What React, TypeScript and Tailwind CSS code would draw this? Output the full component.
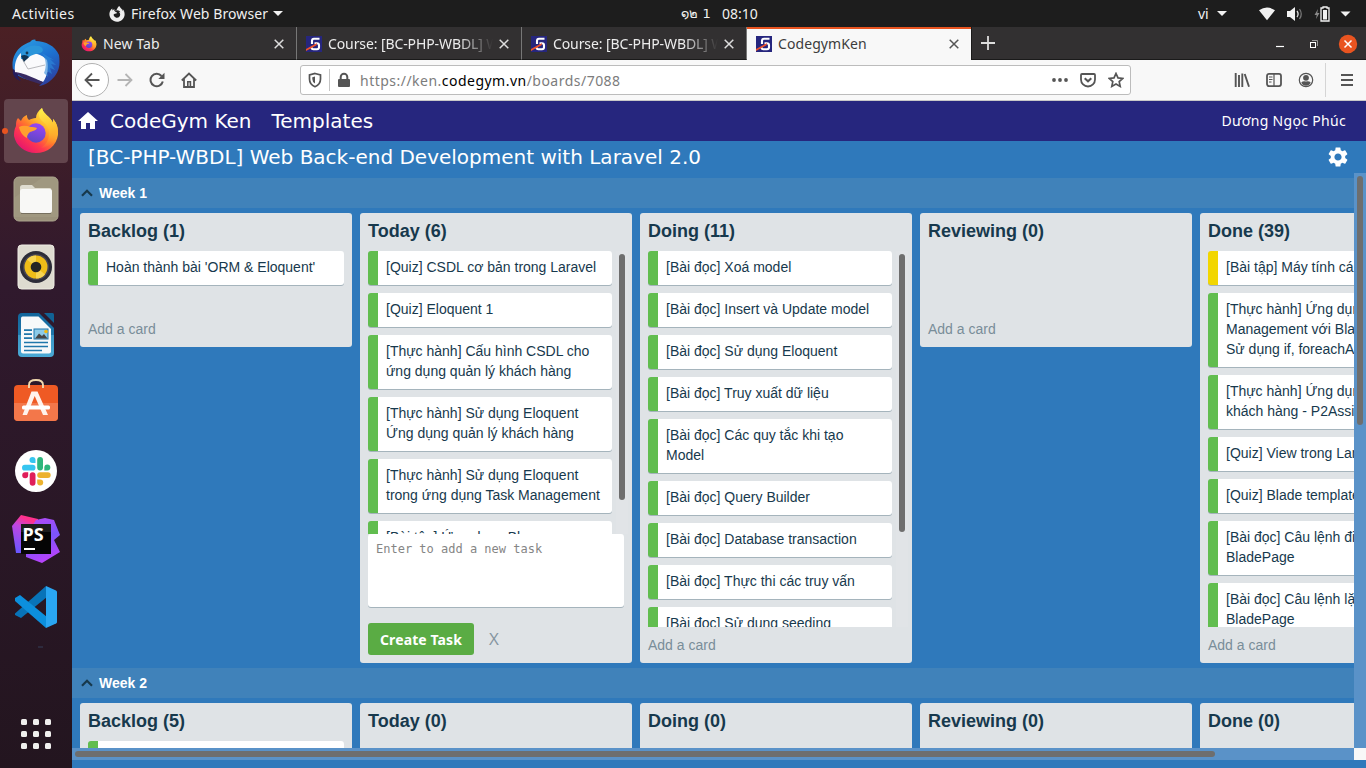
import type { ReactNode } from "react";
import { MdHome, MdSettings } from "react-icons/md";
import { FaFirefoxBrowser } from "react-icons/fa";

const UI = "font-['Noto_Sans','Open_Sans','DejaVu_Sans',sans-serif]";

/* ---------- logos ---------- */

function FirefoxLogo({ id, className }: { id: string; className: string }) {
  return (
    <svg viewBox="0 0 48 48" className={className}>
      <defs>
        <linearGradient id={id + "a"} x1="0.85" y1="0.1" x2="0.2" y2="0.95">
          <stop offset="0" stopColor="#fff44f" />
          <stop offset="0.3" stopColor="#ffbd2e" />
          <stop offset="0.5" stopColor="#ff7b2b" />
          <stop offset="0.72" stopColor="#ff3750" />
          <stop offset="1" stopColor="#e5146f" />
        </linearGradient>
        <linearGradient id={id + "b"} x1="0.6" y1="0" x2="0.3" y2="1">
          <stop offset="0" stopColor="#9a45f5" />
          <stop offset="1" stopColor="#5b47c4" />
        </linearGradient>
        <linearGradient id={id + "c"} x1="0.5" y1="0" x2="0.6" y2="1">
          <stop offset="0" stopColor="#fff04a" />
          <stop offset="0.6" stopColor="#ffb52c" />
          <stop offset="1" stopColor="#ff8a2b" stopOpacity="0" />
        </linearGradient>
      </defs>
      <path d="M30 1c-4 3-6 6-6 10-3 0-5 1-7 2-2-2-2-3-2-5-3 1-5 3-6 6l-3-3c-2 2-2 5-2 8-2 4-2 7-2 10 2 10 11 17 22 17s21-7 22-19c0-7-2-12-5-15 0 2 0 3 0 4C38 9 31 7 30 1z" fill={"url(#" + id + "a)"} />
      <path d="M30 1c-4 5-4 9 0 13 6 4 8 8 7 15-1 6-4 9-8 12 9-1 17-7 17-16 0-6-2-10-5-13v4C38 9 31 7 30 1z" fill={"url(#" + id + "c)"} />
      <circle cx="24" cy="26" r="9.700" fill={"url(#" + id + "b)"} />
      <path d="M7 20c4-2 8-1 12 0 2 0 4 0 6 1-1 3-5 3-7 4-2 2-3 3-3 6-4-2-7-6-8-11z" fill="#ffa02e" />
    </svg>
  );
}

function ThunderbirdLogo() {
  return (
    <svg viewBox="0 0 48 48" className="size-12">
      <defs>
        <linearGradient id="tb" x1="0.2" y1="0" x2="0.7" y2="1">
          <stop offset="0" stopColor="#2a9be0" />
          <stop offset="0.5" stopColor="#1d6fd0" />
          <stop offset="1" stopColor="#2d3f9e" />
        </linearGradient>
      </defs>
      <path d="M18 3c2-3 5-3 6-2l-1 1c11 0 20 5 24 14 1 8 1 14-4 21-4 5-9 9-16 10l4-4C15 42 4 38 1 31c-2-10 2-19 9-24 3-2 5-3 8-4z" fill="url(#tb)" />
      <path d="M1 30c-1 6 2 10 8 12-3-3-4-6-2-8z" fill="#241c5c" />
      <path d="M9 14c-5 4-7 12-6 19 6 3 17 6 28 10 4-5 6-14 4-22-6-7-17-8-26-7z" fill="#fafafc" />
      <path d="M9 18l7 12 17-4" fill="none" stroke="#b9b9bd" strokeWidth="1" />
      <path d="M3 33c8 1 17 5 28 10l-3 2C17 42 8 38 3 33z" fill="#382a62" />
      <path d="M9 14c4-6 10-9 18-7 5 2 5 6 1 7-5 1-9 2-11 4-2 2-5 2-8 2z" fill="#2b95da" />
      <path d="M9 17c3-2 6-1 8 1-1 2-4 3-5 5z" fill="#103454" />
      <circle cx="15" cy="14" r="1.400" fill="#163653" />
      <path d="M30 14l12 7-4-1 6 6-5-1 4 6-5-2 2 6-5-3 1 6-4-4c3-7 2-14-2-20z" fill="#2f8bdb" opacity="0.600" />
    </svg>
  );
}

function FilesLogo() {
  return (
    <svg viewBox="0 0 46 46" className="size-[46px]">
      <rect x="1" y="1" width="44" height="44" rx="5" fill="#9b927b" stroke="#aaa38d" />
      <path d="M1 22L30 1h11l4 4v36H1z" fill="#a79f88" opacity="0.450" />
      <path d="M7 14v-2.500q0-2.500 2.500-2.500H19l3 3h14.500q2 0 2 2v6H7z" fill="#dfdccf" />
      <rect x="7" y="13" width="32" height="24" rx="2.500" fill="#f8f8f6" />
      <path d="M8 37.500h30" stroke="#77705f" strokeWidth="1" />
    </svg>
  );
}

function RhythmboxLogo() {
  return (
    <svg viewBox="0 0 46 46" className="size-[46px]">
      <rect x="5" y="1" width="36" height="44" rx="3.500" fill="#dedbd0" stroke="#eeece4" />
      <circle cx="23" cy="23" r="16" fill="#2c2c38" />
      <circle cx="23" cy="23" r="13" fill="#4a4754" />
      <circle cx="23" cy="23" r="11.500" fill="#efbd18" />
      <path d="M23 23L14 15.500a11.500 11.500 0 0 1 9-4zM23 23l9 7.500a11.500 11.500 0 0 1-9 4z" fill="#f6d451" />
      <circle cx="23" cy="23" r="5.300" fill="#252525" />
    </svg>
  );
}

function WriterLogo() {
  return (
    <svg viewBox="0 0 46 46" className="size-[46px]">
      <defs>
        <linearGradient id="wr" x1="0" y1="0" x2="0" y2="1">
          <stop offset="0" stopColor="#11659b" />
          <stop offset="0.49" stopColor="#1f77ab" />
          <stop offset="0.5" stopColor="#3b97c6" />
          <stop offset="1" stopColor="#4aa9d5" />
        </linearGradient>
      </defs>
      <path d="M9 1h17l15 15v25q0 4-4 4H9q-4 0-4-4V5q0-4 4-4z" fill="url(#wr)" />
      <path d="M31 1h8.500q1.500 0 1.500 1.500V11z" fill="#116294" />
      <path d="M9.500 4.500h16L38 17v22.500q0 2-2 2H10q-2 0-2-2V6.500q0-2 1.500-2z" fill="#f7f9fa" />
      <path d="M11 18.200h8M11 22.200h8M11 26.200h8M11 30.500h24M11 34.500h24M11 38.500h18" stroke="#1f77ab" strokeWidth="1.700" />
      <rect x="21" y="17" width="14" height="10" fill="#8ccbe8" stroke="#1f77ab" />
      <path d="M22 26.500l4-5 3 2.500 2-2 3.500 4.500z" fill="#474747" />
      <circle cx="33" cy="19.500" r="1.800" fill="#f2b90f" />
    </svg>
  );
}

function SoftwareLogo() {
  return (
    <svg viewBox="0 0 46 46" className="size-[46px]">
      <rect x="1" y="7" width="44" height="36" rx="4" fill="#ef5a24" />
      <path d="M1 25h44v14q0 4-4 4H5q-4 0-4-4z" fill="#f3774a" />
      <path d="M16 10V7q0-5 7-5t7 5v3" fill="none" stroke="#f2d9ae" strokeWidth="1.900" />
      <path d="M18.500 13.500h6L35 37h-5L21.700 18 14 37H9.500z" fill="#fff2ec" />
      <rect x="9" y="27.500" width="28" height="4" rx="1.500" fill="#fff" />
    </svg>
  );
}

function SlackLogo() {
  return (
    <svg viewBox="0 0 42 42" className="size-[42px]">
      <circle cx="21" cy="21" r="21" fill="#fff" />
      <g fill="#36c5f0">
        <rect x="7" y="14.800" width="13.500" height="5.800" rx="2.900" />
        <path d="M20.500 13h-3a3 3 0 1 1 3-3z" />
      </g>
      <g fill="#2eb67d">
        <rect x="22.200" y="7" width="5.800" height="13.500" rx="2.900" />
        <path d="M29.300 20.500v-3a3 3 0 1 1 3 3z" />
      </g>
      <g fill="#ecb22e">
        <rect x="22.200" y="22.200" width="13.500" height="5.800" rx="2.900" />
        <path d="M22.200 29.500h3a3 3 0 1 1-3 3z" />
      </g>
      <g fill="#e01e5a">
        <rect x="14.700" y="22.200" width="5.800" height="13.500" rx="2.900" />
        <path d="M13.200 22.200v3a3 3 0 1 1-3-3z" />
      </g>
    </svg>
  );
}

function PhpStormLogo() {
  return (
    <svg viewBox="0 0 48 48" className="size-12">
      <defs>
        <linearGradient id="ps1" x1="0.6" y1="0" x2="0.3" y2="1">
          <stop offset="0.1" stopColor="#ff318c" />
          <stop offset="0.35" stopColor="#c046e0" />
          <stop offset="1" stopColor="#6a57ff" />
        </linearGradient>
        <linearGradient id="ps2" x1="0.2" y1="0" x2="0.5" y2="1">
          <stop offset="0" stopColor="#b74af7" />
          <stop offset="0.5" stopColor="#7a55fa" />
          <stop offset="1" stopColor="#bb42fb" />
        </linearGradient>
      </defs>
      <path d="M0 11L9 0l17 4-3 34H4z" fill="url(#ps1)" />
      <path d="M24 5l9-2 9 2 6 15-6 5 6 12-18 11-16-6V20z" fill="url(#ps2)" />
      <rect x="9" y="9" width="30" height="30" fill="#050505" />
      <rect x="9" y="9" width="30" height="8" fill="#333" opacity="0.500" />
      <text x="10.500" y="26" className="font-['Noto_Sans',sans-serif] text-[18px] font-bold" fill="#fff">PS</text>
      <rect x="12" y="33" width="11" height="2" fill="#fff" />
    </svg>
  );
}

function CodeLogo() {
  return (
    <svg viewBox="0 0 42 42" className="size-[42px]">
      <path d="M0 27.500L31 0l1 11L6 32 0 29z" fill="#0873b8" />
      <path d="M0 12l5-3 27 22-1 11L0 15z" fill="#0c8fdd" />
      <path d="M31 0l10 4.500q1 .5 1 1.500v30q0 1-1 1.500L31 42z" fill="#2aa6f2" />
    </svg>
  );
}

function GymLogo() {
  return (
    <svg viewBox="0 0 16 16" className="size-4 shrink-0">
      <rect width="16" height="16" fill="#26267e" />
      <path d="M13.500 2.700H8Q6 2.700 6 5v3M8.500 7.300H11q2 0 2 2v2q0 2-2 2H7.500q-2 0-2-2" fill="none" stroke="#fff" strokeWidth="2.100" />
      <path d="M0 13L11 7l-.5 2.200L0 15z" fill="#f0522b" />
    </svg>
  );
}

/* ---------- desktop shell ---------- */

function Caret() {
  return (
    <svg viewBox="0 0 10 5" className="h-[5px] w-[10px] shrink-0">
      <path d="M0 0h10L5 5z" fill="#f2f2f2" />
    </svg>
  );
}

function TopBar() {
  return (
    <header className={`flex h-[27px] shrink-0 items-center bg-[#1d1d1d] text-[14px] leading-none text-[#f0f0f0] ${UI}`}>
      <span className="ml-3 w-[63px] tracking-[0.42px] whitespace-nowrap">Activities</span>
      <FaFirefoxBrowser className="ml-[34px] size-4 text-[#eee]" />
      <span className="ml-[6px] w-[138px] tracking-[0.09px] whitespace-nowrap">Firefox Web Browser</span>
      <span className="ml-[4px]"><Caret /></span>
      <span className="ml-[398px] w-[34px] whitespace-pre font-['DejaVu_Sans','Noto_Sans',sans-serif] text-[13px]">໑๒ 1</span>
      <span className="ml-[7px] w-[37px] whitespace-nowrap">08:10</span>
      <span className="ml-[439px] w-[12px]">vi</span>
      <span className="ml-[7px]"><Caret /></span>
      <svg viewBox="0 0 100 20" className="ml-[31px] h-5 w-[100px]">
        <path d="M1 6.200Q9 .8 17 6.200L9 16.200z" fill="#f2f2f2" />
        <path d="M29 7h3l5-4v14l-5-4h-3z" fill="#f2f2f2" />
        <path d="M39 7q2.200 3 0 6" stroke="#ddd" fill="none" strokeWidth="1.300" />
        <path d="M41.500 5q3.500 5 0 10" stroke="#777" fill="none" strokeWidth="1.300" />
        <path d="M60 5l-3.500 6h2.200l-.7 4 3.500-6h-2.200z" fill="#8a8a8a" />
        <path d="M63 4h2V3h4v1h2v13h-8z" fill="none" stroke="#f2f2f2" strokeWidth="1.300" />
        <rect x="65" y="6" width="4" height="9.500" fill="#f2f2f2" />
        <path d="M82.500 7.500h10l-5 5z" fill="#f2f2f2" />
      </svg>
    </header>
  );
}

function Dock() {
  return (
    <aside className="flex w-[72px] shrink-0 flex-col items-center bg-linear-to-b from-[#4b2024] from-0% via-[#30192d] via-35% to-[#23151f] to-100%">
      <div className="mt-3 h-12"><ThunderbirdLogo /></div>
      <div className="relative mt-3 flex h-16 w-16 items-center justify-center rounded bg-[#63454d]">
        <span className="absolute -left-px top-[29px] size-[6px] -translate-x-px rounded-full bg-[#e95420]" />
        <FirefoxLogo id="dock" className="size-12" />
      </div>
      <div className="mt-[13px]"><FilesLogo /></div>
      <div className="mt-[22px]"><RhythmboxLogo /></div>
      <div className="mt-[22px]"><WriterLogo /></div>
      <div className="mt-[20px]"><SoftwareLogo /></div>
      <div className="mt-[26px]"><SlackLogo /></div>
      <div className="mt-[23px]"><PhpStormLogo /></div>
      <div className="mt-[23px]"><CodeLogo /></div>
      <div className="mt-[18px] ml-2 h-[2px] w-[5px] bg-[#2d2a3d]" />
      <div className="mt-[71px] grid grid-cols-3 gap-[6px]">
        {Array.from({ length: 9 }, (_, i) => (
          <span key={i} className="size-[6px] rounded-[1.5px] bg-[#f0efee]" />
        ))}
      </div>
    </aside>
  );
}

/* ---------- browser chrome ---------- */

function CloseX({ className }: { className: string }) {
  return (
    <svg viewBox="0 0 10 10" className={`size-[10px] shrink-0 ${className}`}>
      <path d="M.7.7l8.600 8.600M9.300.7L.7 9.300" stroke="currentColor" strokeWidth="1.500" />
    </svg>
  );
}

function Tab({ icon, title, active, fade }: { icon: ReactNode; title: string; active?: boolean; fade?: boolean }) {
  const look = active
    ? "border-t-2 border-t-[#e95420] bg-[#f8f8f8] pb-px text-[#3c3c3c] w-[224px]"
    : "border-r border-r-[#777] border-b border-b-[#1a1a1a] pt-px text-[#ececec] w-[225px]";
  return (
    <div className={`flex h-full shrink-0 items-center pl-[9px] ${look}`}>
      {icon}
      <span
        className={`ml-[6px] w-[166px] overflow-hidden text-[14px] leading-5 whitespace-nowrap ${
          fade ? "tracking-[-0.1px] mask-[linear-gradient(to_right,black_130px,transparent_165px)]" : "tracking-[0.08px]"
        }`}
      >
        {title}
      </span>
      <CloseX className={active ? "ml-[5px] text-[#555]" : "ml-[5px] text-[#ddd]"} />
    </div>
  );
}

function TabStrip() {
  return (
    <div className={`flex h-[33px] shrink-0 bg-[#323031] ${UI}`}>
      <Tab icon={<FirefoxLogo id="tab" className="size-4 shrink-0" />} title="New Tab" />
      <Tab icon={<GymLogo />} title="Course: [BC-PHP-WBDL] W" fade />
      <Tab icon={<GymLogo />} title="Course: [BC-PHP-WBDL] W" fade />
      <Tab icon={<GymLogo />} title="CodegymKen" active />
      <div className="flex flex-1 items-center border-b border-b-[#1a1a1a] border-l border-l-[#1a1a1a] pl-[9px]">
        <svg viewBox="0 0 14 14" className="size-[14px]">
          <path d="M7 0v14M0 7h14" stroke="#ddd" strokeWidth="1.800" />
        </svg>
        <svg viewBox="0 0 82 20" className="mt-px mr-[8px] ml-auto h-5 w-[82px]">
          <path d="M0 12.500h8" stroke="#fff" strokeWidth="1.200" />
          <rect x="34.500" y="8.500" width="5" height="5" fill="none" stroke="#fff" />
          <path d="M36 6.500h5.500V12" fill="none" stroke="#999" />
          <circle cx="72" cy="10" r="9.200" fill="#e95420" />
          <path d="M68.500 6.500l7 7M75.500 6.500l-7 7" stroke="#fff" strokeWidth="1.500" />
        </svg>
      </div>
    </div>
  );
}

function NavIcon({ children, className = "" }: { children: ReactNode; className?: string }) {
  return (
    <svg viewBox="0 0 16 16" fill="none" stroke="currentColor" strokeWidth="1.800" className={`size-4 shrink-0 ${className}`}>
      {children}
    </svg>
  );
}

function NavBar() {
  return (
    <div className={`flex h-[41px] shrink-0 items-center border-b border-b-[#c8c8c8] bg-[#f8f8f8] text-[#555] ${UI}`}>
      <span className="ml-[3px] flex size-[34px] items-center justify-center rounded-full border border-[#b1b1b1] bg-white">
        <NavIcon><path d="M15.500 8H1.500M8 1.500L1.500 8 8 14.500" /></NavIcon>
      </span>
      <NavIcon className="ml-2 text-[#b5b5b5]"><path d="M.5 8h14M8.500 2l6 6-6 6" /></NavIcon>
      <NavIcon className="ml-4">
        <path d="M13.800 9.500A6.200 6.200 0 1 1 12.500 4" strokeWidth="2" />
        <path d="M15.500.8V7H9.300z" fill="currentColor" stroke="none" />
      </NavIcon>
      <NavIcon className="ml-4">
        <path d="M.8 8.500L8 1.500l7.200 7M3 7v8h10V7" />
        <path d="M6.800 15V9.700h2.600V15" strokeWidth="1.600" />
      </NavIcon>

      <div className="ml-[103px] flex h-[30px] w-[831px] items-center rounded-[3px] border border-[#bcbcbc] bg-white">
        <NavIcon className="ml-[6px] size-[16px]">
          <path d="M8 1.500l5.500 1.500v4q0 5.500-5.500 7.700Q2.500 12.500 2.500 7V3z" strokeWidth="1.700" />
          <path d="M8 4.500v7Q5.300 10 5.300 7V5.200z" fill="currentColor" stroke="none" />
        </NavIcon>
        <span className="ml-[6px] h-[22px] w-px bg-[#c4c4c4]" />
        <NavIcon className="ml-[6px]">
          <rect x="2" y="7" width="12" height="8" rx="1" fill="currentColor" stroke="none" />
          <path d="M4.700 7.500V5a3.300 3.300 0 0 1 6.600 0v2.500" strokeWidth="2" />
        </NavIcon>
        <span className="ml-[8px] w-[266px] pt-px text-[14px] leading-5 tracking-[0.48px] whitespace-nowrap text-[#7c7c7c]">
          https://ken.<span className="text-black">codegym.vn</span>/boards/7088
        </span>
        <NavIcon className="ml-auto text-[#555]">
          <g fill="currentColor" stroke="none">
            <circle cx="2" cy="8" r="1.900" /><circle cx="8" cy="8" r="1.900" /><circle cx="14" cy="8" r="1.900" />
          </g>
        </NavIcon>
        <NavIcon className="ml-[12px]">
          <path d="M2 2h12q1 0 1 1v4.500A7 7 0 0 1 1 7.500V3q0-1 1-1z" />
          <path d="M4.700 6.200L8 9.300l3.300-3.100" strokeWidth="2" />
        </NavIcon>
        <NavIcon className="mr-[6px] ml-[12px]">
          <path d="M8 1.500l2 4.400 4.800.5-3.600 3.200 1 4.800L8 12l-4.200 2.400 1-4.800L1.200 6.400 6 5.900z" strokeWidth="1.700" />
        </NavIcon>
      </div>

      <NavIcon className="ml-[103px]">
        <path d="M1.700 1v14M5 3v12M8.300 1.500V15M10.700 2L15 14.800" strokeWidth="1.900" />
      </NavIcon>
      <NavIcon className="ml-4">
        <rect x="1" y="1.900" width="14" height="12.200" rx="2" />
        <path d="M8 2v12M3 5h3.500M3 7.500h3.500M3 10h2.500" strokeWidth="1.200" />
      </NavIcon>
      <NavIcon className="ml-4">
        <circle cx="8" cy="8" r="6.700" strokeWidth="1.200" />
        <circle cx="8" cy="5.800" r="2.900" fill="currentColor" stroke="none" />
        <path d="M3.300 10.500Q5 8.700 8 9.500q3-.8 4.700 1Q11 13.700 8 13.700t-4.700-3.200z" fill="currentColor" stroke="none" />
      </NavIcon>
      <span className="ml-[11px] h-[34px] w-px bg-[#d5d5d5]" />
      <NavIcon className="ml-[13px]"><path d="M2 3h12M2 8h12M2 13h12" strokeWidth="2" /></NavIcon>
    </div>
  );
}

/* ---------- board ---------- */

type Task = { text: string; tone?: "yellow" };
type Column = { title: string; tasks: Task[]; kind: "fit" | "form" | "tall"; thumb?: string };

const weekOne: Column[] = [
  { title: "Backlog (1)", kind: "fit", tasks: [{ text: "Hoàn thành bài 'ORM & Eloquent'" }] },
  {
    title: "Today (6)",
    kind: "form",
    thumb: "h-[246px]",
    tasks: [
      { text: "[Quiz] CSDL cơ bản trong Laravel" },
      { text: "[Quiz] Eloquent 1" },
      { text: "[Thực hành] Cấu hình CSDL cho\nứng dụng quản lý khách hàng" },
      { text: "[Thực hành] Sử dụng Eloquent\nỨng dụng quản lý khách hàng" },
      { text: "[Thực hành] Sử dụng Eloquent\ntrong ứng dụng Task Management" },
      { text: "[Bài tập] Ứng dụng Blog" },
    ],
  },
  {
    title: "Doing (11)",
    kind: "tall",
    thumb: "h-[278px]",
    tasks: [
      { text: "[Bài đọc] Xoá model" },
      { text: "[Bài đọc] Insert và Update model" },
      { text: "[Bài đọc] Sử dụng Eloquent" },
      { text: "[Bài đọc] Truy xuất dữ liệu" },
      { text: "[Bài đọc] Các quy tắc khi tạo\nModel" },
      { text: "[Bài đọc] Query Builder" },
      { text: "[Bài đọc] Database transaction" },
      { text: "[Bài đọc] Thực thi các truy vấn" },
      { text: "[Bài đọc] Sử dụng seeding" },
    ],
  },
  { title: "Reviewing (0)", kind: "fit", tasks: [] },
  {
    title: "Done (39)",
    kind: "tall",
    thumb: "h-[80px]",
    tasks: [
      { text: "[Bài tập] Máy tính cá nhân", tone: "yellow" },
      { text: "[Thực hành] Ứng dụng Task\nManagement với Blade\nSử dụng if, foreachAs" },
      { text: "[Thực hành] Ứng dụng\nkhách hàng - P2Assign" },
      { text: "[Quiz] View trong Laravel" },
      { text: "[Quiz] Blade template" },
      { text: "[Bài đọc] Câu lệnh điều\nBladePage" },
      { text: "[Bài đọc] Câu lệnh lặp\nBladePage" },
    ],
  },
];

const weekTwo: Column[] = [
  { title: "Backlog (5)", kind: "fit", tasks: [{ text: "" }] },
  { title: "Today (0)", kind: "fit", tasks: [] },
  { title: "Doing (0)", kind: "fit", tasks: [] },
  { title: "Reviewing (0)", kind: "fit", tasks: [] },
  { title: "Done (0)", kind: "fit", tasks: [] },
];

function Card({ text, tone }: Task) {
  return (
    <div
      className={`min-h-[34px] shrink-0 rounded-[3px] border-l-[10px] bg-white pt-[6px] pb-2 pl-2 text-[14px] leading-5 whitespace-pre text-[#17394d] shadow-[0_1px_0_#a5b4bc] ${
        tone === "yellow" ? "border-l-[#f2d600]" : "border-l-[#61bd4f]"
      }`}
    >
      {text}
    </div>
  );
}

function BoardColumn({ title, tasks, kind, thumb }: Column) {
  const listHeight = kind === "form" ? "h-[283px]" : kind === "tall" ? "h-[376px]" : "h-[60px]";
  return (
    <section className="w-[272px] shrink-0 rounded-[3px] bg-[#dfe3e6]">
      <h3 className="h-[38px] pt-[6px] pl-2 text-[18px] leading-6 font-bold text-[#17394d]">{title}</h3>
      <div className={`flex overflow-hidden pl-2 ${listHeight}`}>
        <div className={`flex shrink-0 flex-col gap-2 ${thumb ? "w-[244px]" : "w-[256px]"}`}>
          {tasks.map((t, i) => (
            <Card key={i} {...t} />
          ))}
        </div>
        {thumb && (
          <div className="ml-1 w-3 bg-[#e1e4e7] pt-[3px] pl-[3px]">
            <div className={`w-[6px] rounded-full bg-[#6e6e6e] ${thumb}`} />
          </div>
        )}
      </div>
      {kind === "form" ? (
        <div className="px-2 pb-2">
          <textarea
            placeholder="Enter to add a new task"
            className="block h-[73px] w-full resize-none rounded-[3px] bg-white p-2 font-['DejaVu_Sans_Mono',monospace] text-[12px] leading-[14px] shadow-[0_1px_0_#a5b4bc] outline-none placeholder:text-[#858585]"
          />
          <div className="mt-4 flex items-center">
            <button className={`h-8 w-[106px] rounded-[3px] bg-[#5aac44] pt-px text-[14px] leading-5 font-bold tracking-[0.1px] text-white ${UI}`}>
              Create Task
            </button>
            <span className="ml-[15px] font-['Open_Sans','Noto_Sans',sans-serif] text-[17px] leading-5 text-[#8595a0]">X</span>
          </div>
        </div>
      ) : (
        <div className="h-9 pt-2 pl-2 text-[14px] leading-5 text-[#798d99]">Add a card</div>
      )}
    </section>
  );
}

function Week({ name, columns }: { name: string; columns: Column[] }) {
  return (
    <div className="mt-[5px]">
      <div className="flex h-[30px] items-center bg-[#4082ba] pl-[9px]">
        <svg viewBox="0 0 12 8" className="h-2 w-3">
          <path d="M1 6.800l5-5 5 5" fill="none" stroke="#17394d" strokeWidth="2.200" />
        </svg>
        <span className="ml-[6px] text-[14px] leading-5 font-bold text-white">{name}</span>
      </div>
      <div className="mt-[5px] flex items-start gap-2 pl-2">
        {columns.map((c) => (
          <BoardColumn key={c.title} {...c} />
        ))}
      </div>
    </div>
  );
}

function Board() {
  return (
    <main className="flex min-h-0 flex-1 flex-col bg-[#2f79bb] font-['Liberation_Sans',Arial,sans-serif]">
      <nav className="flex h-10 shrink-0 items-center bg-[#26267e] font-['DejaVu_Sans',sans-serif] text-[20px] text-white">
        <MdHome className="ml-1 size-6" />
        <span className="ml-[10px]">CodeGym Ken</span>
        <span className="ml-5">Templates</span>
        <span className={`mr-5 ml-auto pb-[2px] text-[14px] tracking-[0.32px] ${UI}`}>Dương Ngọc Phúc</span>
      </nav>
      <div className="flex h-8 shrink-0 items-center pr-4 pl-4 font-['DejaVu_Sans',sans-serif] text-white">
        <h1 className="text-[20px] leading-8">[BC-PHP-WBDL] Web Back-end Development with Laravel 2.0</h1>
        <MdSettings className="ml-auto size-6" />
      </div>
      <div className="flex h-[575px] shrink-0">
        <div className="w-[1282px] overflow-hidden">
          <Week name="Week 1" columns={weekOne} />
          <Week name="Week 2" columns={weekTwo} />
        </div>
        <div className="w-3 bg-[#5a92c8] pt-[3px] pl-[3px]">
          <div className="h-[249px] w-[6px] rounded-full bg-[#6e6e6e]" />
        </div>
      </div>
      <div className="flex h-3 shrink-0">
        <div className="w-[1282px] bg-[#5a92c8] pt-[3px] pl-[3px]">
          <div className="h-[6px] w-[1140px] rounded-full bg-[#6e6e6e]" />
        </div>
        <div className="w-3 bg-[#f8f8f8]" />
      </div>
    </main>
  );
}

export default function App() {
  return (
    <div className="flex h-[768px] w-[1366px] flex-col overflow-hidden">
      <TopBar />
      <div className="flex min-h-0 flex-1">
        <Dock />
        <div className="flex min-w-0 flex-1 flex-col">
          <TabStrip />
          <NavBar />
          <Board />
        </div>
      </div>
    </div>
  );
}
